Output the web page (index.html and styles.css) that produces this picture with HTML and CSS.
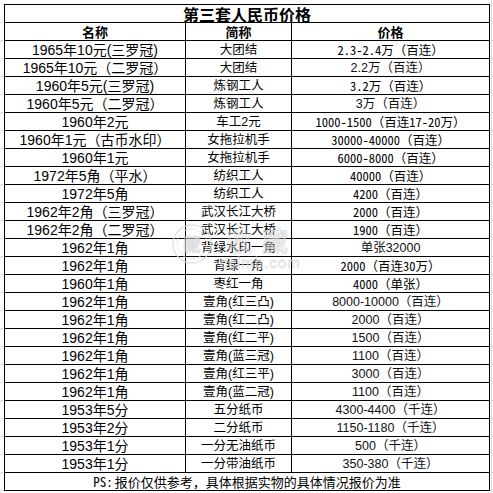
FILE: index.html
```html
<!DOCTYPE html>
<html lang="zh-CN">
<head>
<meta charset="utf-8">
<title>第三套人民币价格</title>
<link rel="stylesheet" href="styles.css">
</head>
<body>
<div class="sheet">
  <table class="price">
    <colgroup><col class="c1"><col class="c2"><col class="c3"></colgroup>
    <tr class="title"><td colspan="3">第三套人民币价格</td></tr>
    <tr class="head"><th>名称</th><th>简称</th><th>价格</th></tr>
    <tr><td>1965年10元(三罗冠)</td><td>大团结</td><td class="m">2.3-2.4万（百连）</td></tr>
    <tr><td>1965年10元（二罗冠）</td><td>大团结</td><td>2.2万（百连）</td></tr>
    <tr><td>1960年5元(三罗冠)</td><td>炼钢工人</td><td class="m">3.2万（百连）</td></tr>
    <tr><td>1960年5元（二罗冠）</td><td>炼钢工人</td><td>3万（百连）</td></tr>
    <tr><td>1960年2元</td><td>车工2元</td><td class="m">1000-1500（百连17-20万）</td></tr>
    <tr><td>1960年1元（古币水印）</td><td>女拖拉机手</td><td class="m">30000-40000（百连）</td></tr>
    <tr><td>1960年1元</td><td>女拖拉机手</td><td class="m">6000-8000（百连）</td></tr>
    <tr><td>1972年5角（平水）</td><td>纺织工人</td><td class="m">40000（百连）</td></tr>
    <tr><td>1972年5角</td><td>纺织工人</td><td class="m">4200（百连）</td></tr>
    <tr><td>1962年2角（三罗冠）</td><td>武汉长江大桥</td><td class="m">2000（百连）</td></tr>
    <tr><td>1962年2角（二罗冠）</td><td>武汉长江大桥</td><td class="m">1900（百连）</td></tr>
    <tr><td>1962年1角</td><td>背绿水印一角</td><td>单张32000</td></tr>
    <tr><td>1962年1角</td><td>背绿一角</td><td class="m">2000（百连30万）</td></tr>
    <tr><td>1960年1角</td><td>枣红一角</td><td class="m">4000（单张）</td></tr>
    <tr><td>1962年1角</td><td>壹角(红三凸)</td><td>8000-10000（百连）</td></tr>
    <tr><td>1962年1角</td><td>壹角(红二凸)</td><td>2000（百连）</td></tr>
    <tr><td>1962年1角</td><td>壹角(红二平)</td><td>1500（百连）</td></tr>
    <tr><td>1962年1角</td><td>壹角(蓝三冠)</td><td>1100（百连）</td></tr>
    <tr><td>1962年1角</td><td>壹角(红三平)</td><td>3000（百连）</td></tr>
    <tr><td>1962年1角</td><td>壹角(蓝二冠)</td><td>1100（百连）</td></tr>
    <tr><td>1953年5分</td><td>五分纸币</td><td>4300-4400（千连）</td></tr>
    <tr><td>1953年2分</td><td>二分纸币</td><td>1150-1180（千连）</td></tr>
    <tr><td>1953年1分</td><td>一分无油纸币</td><td>500（千连）</td></tr>
    <tr><td>1953年1分</td><td>一分带油纸币</td><td>350-380（千连）</td></tr>
    <tr class="foot"><td colspan="3"><span class="ps">PS:</span>报价仅供参考，具体根据实物的具体情况报价为准</td></tr>
  </table>
  <div class="watermark">
    <svg width="160" height="64" viewBox="0 0 160 64">
      <circle cx="20" cy="24" r="19" fill="none" stroke="#dcdcdc" stroke-width="1.4"/>
      <circle cx="20" cy="24" r="15" fill="none" stroke="#e6e6e6" stroke-width="1"/>
      <text x="20" y="31" text-anchor="middle" class="wm-seal">藏</text>
      <text x="54" y="31" class="wm-big">收藏</text>
      <text x="48" y="48" class="wm-url">cclmb.com</text>
    </svg>
  </div>
</div>
</body>
</html>
```
FILE: styles.css
```css
html, body {
  margin: 0;
  padding: 0;
}
body {
  width: 493px;
  height: 493px;
  overflow: hidden;
  background-color: #fff;
  background-image:
    linear-gradient(#d5dbe6, #d5dbe6),
    repeating-linear-gradient(to bottom, transparent 0, transparent 17px, #dde1e8 17px, #dde1e8 18px);
  background-size: 1px 100%, 100% 100%;
  background-position: 491px 0, 0 5px;
  background-repeat: no-repeat, no-repeat;
}
.sheet {
  position: relative;
  padding: 4px 0 0 4px;
}
.price {
  border-collapse: collapse;
  table-layout: fixed;
  width: 485px;
  background: #fff;
  font-family: "Liberation Sans", "Noto Sans CJK SC", sans-serif;
  color: #000;
}
.c1 { width: 181px; }
.c2 { width: 106px; }
.c3 { width: 198px; }
.price td, .price th {
  border: 1px solid #000;
  padding: 0;
  height: 17px;
  line-height: 16px;
  text-align: center;
  white-space: nowrap;
  vertical-align: middle;
}
.price tr { height: 18px; }
.price td:nth-child(1) { font-size: 14px; }
.price td:nth-child(2) { font-size: 12.5px; }
.price td:nth-child(3) { font-size: 12.5px; color: #111; }
.price td.m {
  font-family: "Noto Sans Mono CJK SC", "Liberation Mono", "Noto Sans CJK SC", monospace;
  font-size: 12.5px;
  color: #000;
}
.title td {
  font-family: "Noto Sans CJK SC", sans-serif;
  font-weight: 700;
  font-size: 16px !important;
  line-height: 16px;
}
.head th {
  font-family: "Noto Sans CJK SC", sans-serif;
  font-weight: 700;
  font-size: 13px;
}
.foot td {
  font-family: "Noto Sans CJK SC", sans-serif;
  font-size: 13px !important;
}
.ps {
  font-family: "Noto Sans Mono CJK SC", "Liberation Mono", monospace;
  margin-right: 2px;
}
.watermark {
  position: absolute;
  left: 172px;
  top: 220px;
  pointer-events: none;
  opacity: 0.8;
}
.wm-seal {
  font-family: "Noto Sans CJK SC", sans-serif;
  font-size: 18px;
  fill: none;
  stroke: #d4d4d4;
  stroke-width: 0.8;
}
.wm-big {
  font-family: "Noto Sans CJK SC", sans-serif;
  font-size: 26px;
  fill: none;
  stroke: #d6d6d6;
  stroke-width: 0.9;
  letter-spacing: 10px;
}
.wm-url {
  font-family: "Liberation Sans", sans-serif;
  font-size: 15px;
  fill: none;
  stroke: #dadada;
  stroke-width: 0.8;
  letter-spacing: 1px;
}
```
